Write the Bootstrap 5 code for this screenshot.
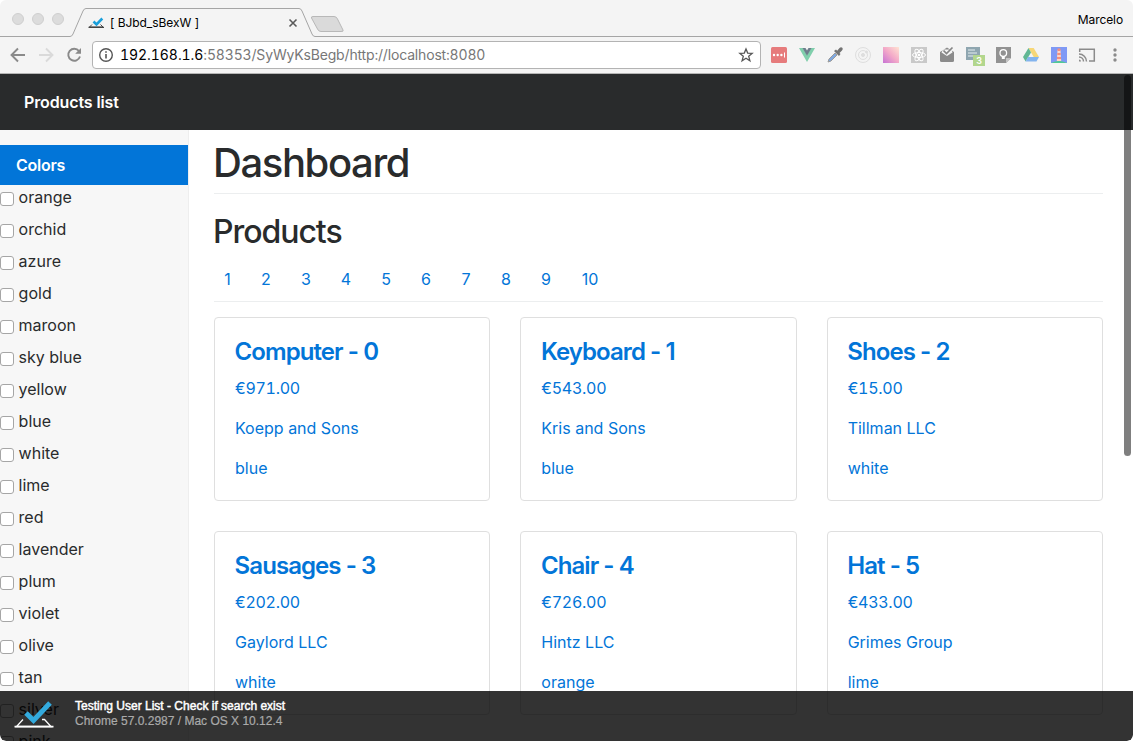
<!DOCTYPE html>
<html lang="en">
<head>
<meta charset="utf-8">
<meta name="viewport" content="width=device-width, initial-scale=1">
<title>Products list</title>
<link href="https://cdn.jsdelivr.net/npm/bootstrap@5.3.0/dist/css/bootstrap.min.css" rel="stylesheet">
<style>
html,body{height:100%;background:#fff}
body{font-family:Inter,"Liberation Sans",sans-serif;font-size:16px;line-height:24px;color:#292b2c;overflow:hidden}
.win{height:741px;border-radius:6px;display:grid;grid-template-rows:37px 36px 1fr;overflow:hidden}
.strip{background:#f4f4f4}
.strip svg{display:block}
.strip .art{position:absolute;inset:0}
.tabname{font-size:12px;line-height:16px;color:#000;margin-left:110px;padding-top:15px;letter-spacing:-.05px;width:176px}
.person{font-size:12px;line-height:16px;color:#000;padding:12px 10px 0 0;letter-spacing:-.1px}
.tools{background:#f4f4f4;padding:0 8px 0 8px}
.addr{height:28px;width:669px;border:1px solid #b3b3b3;border-radius:4px;margin:0 8px 0 7px;padding:0 6px 0 5px;font-size:14px;color:#777;font-variant-numeric:tabular-nums}
.addr b{font-weight:400;color:#000;letter-spacing:-.05px}
.url{padding-left:6px;letter-spacing:-.17px}
.page{overflow:hidden;border-top:1px solid #b5b5b5}
.topbar{height:56px;background:#292b2c;color:#fff;padding:0 24px;font-weight:600;letter-spacing:-.12px}
.side{width:189px;height:620px;background:#f7f7f7;border-right:1px solid #eee;padding-top:15px}
.side h2{height:40px;line-height:40px;font-size:16px;font-weight:600;background:#0275d8;color:#fff;margin:0;padding-left:16px;letter-spacing:-.25px}
.side li{height:32px;line-height:24px}
.side label{gap:4.6px}
.side input{appearance:none;width:14px;height:14px;border:1px solid #a6a6a6;border-radius:3px;background:#fff;margin:7px 0 0}
.board{padding:11px 30px 0 25px;height:620px}
.board h1{font-size:40px;line-height:44px;font-weight:500;margin:0;padding-bottom:8px;border-bottom:1px solid #eceeef;letter-spacing:-1.4px;text-indent:-1px}
.board h3{font-size:32px;line-height:35px;font-weight:500;margin:20px 0 0;letter-spacing:-1.05px;text-indent:-1px}
.pager{padding:18px 0 10px;border-bottom:1px solid #eceeef;margin-bottom:15px}
.pager a{width:40px;text-align:center;color:#0275d8;text-decoration:none}
.pager a:first-child{width:27px;margin-right:5px}
.pager a:last-child{width:48px}
.goods{--bs-gutter-x:30px}
.item{height:184px;border:1px solid #dfdfdf;border-radius:4px;padding:20px;margin-bottom:30px;color:#0275d8}
.item h4{font-size:24px;line-height:27px;font-weight:600;margin:0 0 11px;letter-spacing:-.93px;text-indent:-.4px}
.item p{margin:0 0 16px}
.item .price{font-variant-numeric:tabular-nums;letter-spacing:-.27px}
.status{left:0;right:0;bottom:0;height:50px;background:rgba(0,0,0,.8);border-radius:0 0 6px 6px;font-family:"Liberation Sans",sans-serif;font-size:12px;line-height:15px;color:#aaa;padding-left:14px}
.status strong{color:#fff;font-weight:400;-webkit-text-stroke:.45px #fff}
.caption-text{padding:8px 0 0 20px;-webkit-text-stroke:.2px #aaa}
.thumb{right:2px;top:75px;width:7px;height:381px;border-radius:4px;background:rgba(0,0,0,.5)}
</style>
</head>
<body>
<div class="win position-relative">
  <header class="strip position-relative d-flex justify-content-between">
    <svg class="art" width="1133" height="37" fill="none">
      <g fill="#dcdcdc" stroke="#cfcfcf"><circle cx="18" cy="19" r="5.5"/><circle cx="38" cy="19" r="5.5"/><circle cx="58" cy="19" r="5.5"/></g>
      <path d="M0 36.500H70Q72 36.500 73 34L83 11Q84 8.500 86 8.500H299Q301 8.500 302 11L312 34Q313 36.500 315 36.500H1133" stroke="#a5a5a5"/>
      <path d="M313 16.500H334Q336.500 16.500 337.500 19L343 30Q344 31.500 341 31.500H321Q318.500 31.500 317.500 29L311.500 18Q311 16.500 313 16.500Z" fill="#dadada" stroke="#b8b8b8"/>
      <path d="M289.500 19.500L296.500 26.500M296.500 19.500L289.500 26.500" stroke="#5a5a5a" stroke-width="1.600"/>
      <path d="M92 24.500L89.500 27H103L100.500 24.500" stroke="#444"/><path d="M88.500 27.300H104" stroke="#444" stroke-width="1.200"/>
      <path d="M93.500 21.500L96.500 24.500L102.300 18.500" stroke="#1ba0dc" stroke-width="2.600"/>
    </svg>
    <div class="tabname position-relative">[ BJbd_sBexW ]</div>
    <div class="person position-relative">Marcelo</div>
  </header>
  <div class="tools d-flex align-items-center">
    <svg width="77" height="28" fill="none" stroke="#8a8a8a" stroke-width="1.900">
      <path d="M17 14H4M10 7.500L3.500 14L10 20.500"/>
      <path d="M31 14H44M38 7.500L44.500 14L38 20.500" stroke="#dadada"/>
      <path d="M71 10A6 6 0 1 0 72 15.500"/><path d="M73 7V12.800H67.200Z" fill="#8a8a8a" stroke="none"/>
    </svg>
    <div class="addr d-flex align-items-center bg-white">
      <svg width="16" height="16" fill="none" stroke="#555" stroke-width="1.400"><circle cx="8" cy="8" r="6.300"/><path d="M8 7V11.500M8 4.300V5.800" stroke-width="1.600"/></svg>
      <span class="url flex-grow-1"><b>192.168.1.6</b>:58353/SyWyKsBegb/http://localhost:8080</span>
      <svg width="16" height="16" fill="none" stroke="#555" stroke-width="1.300"><path d="M8 1.900L9.700 6.100L14.200 6.400L10.700 9.300L11.900 13.700L8 11.200L4.100 13.700L5.300 9.300L1.800 6.400L6.300 6.100Z"/></svg>
    </div>
    <div class="d-flex align-items-center flex-grow-1 justify-content-between">
      <svg width="20" height="20"><rect x="2" y="2" width="16" height="16" rx="1.500" fill="#e67b7c"/><g fill="#fff"><circle cx="5" cy="10" r="1.200"/><circle cx="8.700" cy="10" r="1.200"/><circle cx="12.400" cy="10" r="1.200"/><path d="M15 7.500H16V12.500H15Z"/></g></svg>
      <svg width="20" height="20"><path d="M2 3H6L10 10L14 3H18L10 17Z" fill="#80cfac"/><path d="M5.500 3H8.500L10 5.500L11.500 3H14.500L10 10.800Z" fill="#6e7d8c"/></svg>
      <svg width="20" height="20"><path d="M3 17L4 14L10 8L12 10L6 16Z" fill="#7fa8e0" stroke="#9a9a9a"/><path d="M9 6L11 4.500L12.200 5.700L14.500 3Q16 1.500 17.300 2.700Q18.500 4 17 5.500L14.500 8L15.500 9L14 11Z" fill="#737373"/></svg>
      <svg width="20" height="20" fill="none" stroke="#dedede"><circle cx="10" cy="10" r="7.500"/><circle cx="10" cy="10" r="4.500"/><circle cx="10" cy="10" r="1.500" fill="#dedede"/><circle cx="13.500" cy="7" r="1" fill="#dedede"/></svg>
      <svg width="20" height="20"><defs><linearGradient id="pk" x1="0" y1="1" x2="1" y2="0"><stop stop-color="#c773d4"/><stop offset=".5" stop-color="#f3a9c8"/><stop offset="1" stop-color="#ffe3d2"/></linearGradient></defs><rect x="2" y="2" width="16" height="16" fill="url(#pk)"/></svg>
      <svg width="20" height="20"><rect x="2" y="2" width="16" height="16" fill="#c9c9c9"/><g fill="none" stroke="#fff" stroke-width="1"><ellipse cx="10" cy="10" rx="6.500" ry="2.500"/><ellipse cx="10" cy="10" rx="6.500" ry="2.500" transform="rotate(60 10 10)"/><ellipse cx="10" cy="10" rx="6.500" ry="2.500" transform="rotate(120 10 10)"/></g><circle cx="10" cy="10" r="1.300" fill="#fff"/></svg>
      <svg width="20" height="20"><path d="M3 7L10 2.500L17 7V15.500Q17 17 15.500 17H4.500Q3 17 3 15.500Z" fill="#8b8b8b"/><path d="M4.500 7.500L10 11L15.500 7.500L14.500 4.500H6Z" fill="#f4f4f4"/><path d="M6.500 5.500L9.500 8.500L15.500 2.500" stroke="#858585" stroke-width="1.700" fill="none"/></svg>
      <svg width="20" height="22"><path d="M1 3H15V16H1Z" fill="#8fa6b0"/><path d="M3 6H10M3 9H12M3 12H8" stroke="#e6eef0" stroke-width="1.200"/><rect x="8" y="11" width="12" height="11" fill="#b2d68d"/><text x="14" y="20" text-anchor="middle" font-family="Inter, sans-serif" font-size="9" font-weight="600" fill="#fff">3</text></svg>
      <svg width="20" height="20"><path d="M3 2H18V13L13 18H3Z" fill="#929292"/><path d="M18 13L13 18V13Z" fill="#c4c4c4"/><circle cx="10.300" cy="8" r="3.300" fill="none" stroke="#fff" stroke-width="1.300"/><path d="M8.800 11H11.800V14H8.800Z" fill="#fff"/></svg>
      <svg width="20" height="20"><path d="M7.500 3H12.700L18 12H12.700Z" fill="#f7d777"/><path d="M7.500 3L2 12L4.600 16.500L10 7.400Z" fill="#61b794"/><path d="M7 12H18L15.500 16.500H4.600Z" fill="#83b4ee"/></svg>
      <svg width="20" height="20"><rect x="2" y="2" width="16" height="16" fill="#7f99f5"/><path d="M8.500 5H11.500L12.200 16H7.800Z" fill="#ffd4c4"/><path d="M8.500 3.500H11.500V6H8.500ZM8.300 8H11.700V10H8.300ZM8 12H12V14H8Z" fill="#f48f7f"/><path d="M2 18Q10 14 18 18Z" fill="#51c996"/></svg>
      <svg width="20" height="20" fill="none" stroke="#8b8b8b" stroke-width="1.500"><path d="M2.700 7V4.200H17.300V16H12M2 9A7.500 7.500 0 0 1 9.500 16.500M2 12A4.500 4.500 0 0 1 6.500 16.500"/><path d="M2 14.500A2 2 0 0 1 4 16.500H2Z" fill="#8b8b8b" stroke="none"/></svg>
      <svg width="20" height="20" fill="#8b8b8b"><circle cx="10" cy="5" r="1.700"/><circle cx="10" cy="10" r="1.700"/><circle cx="10" cy="15" r="1.700"/></svg>
    </div>
  </div>
  <main class="page">
    <nav class="topbar d-flex align-items-center"><span>Products list</span></nav>
    <div class="d-flex">
      <aside class="side flex-shrink-0">
        <h2>Colors</h2>
        <ul class="list-unstyled m-0" id="colors"></ul>
      </aside>
      <section class="board flex-grow-1">
        <h1>Dashboard</h1>
        <h3>Products</h3>
        <nav class="pager d-flex"><a href="#">1</a><a href="#">2</a><a href="#">3</a><a href="#">4</a><a href="#">5</a><a href="#">6</a><a href="#">7</a><a href="#">8</a><a href="#">9</a><a href="#">10</a></nav>
        <div class="row goods" id="goods"></div>
      </section>
    </div>
  </main>
  <div class="thumb position-absolute"></div>
  <footer class="status position-absolute d-flex">
    <svg width="41" height="50" class="flex-shrink-0" fill="none"><path d="M9 28.500L2.500 35.500H37L30.500 28.500H28" stroke="#fff" stroke-width="1.300"/><path d="M0.500 35.700H39.500" stroke="#fff" stroke-width="1.800"/><path d="M12 22L19.500 29.500L36 12" stroke="#33aadd" stroke-width="5"/></svg>
    <div class="caption-text"><strong class="d-block">Testing User List - Check if search exist</strong><span>Chrome 57.0.2987 / Mac OS X 10.12.4</span></div>
  </footer>
</div>
<script src="https://cdn.jsdelivr.net/npm/bootstrap@5.3.0/dist/js/bootstrap.bundle.min.js"></script>
<script>
const colors=['orange','orchid','azure','gold','maroon','sky blue','yellow','blue','white','lime','red','lavender','plum','violet','olive','tan','silver','pink'];
document.getElementById('colors').innerHTML=colors.map(c=>`<li><label class="d-flex align-items-start"><input type="checkbox"><span>${c}</span></label></li>`).join('');
const goods=[['Computer - 0','€971.00','Koepp and Sons','blue'],['Keyboard - 1','€543.00','Kris and Sons','blue'],['Shoes - 2','€15.00','Tillman LLC','white'],['Sausages - 3','€202.00','Gaylord LLC','white'],['Chair - 4','€726.00','Hintz LLC','orange'],['Hat - 5','€433.00','Grimes Group','lime']];
document.getElementById('goods').innerHTML=goods.map(g=>`<div class="col-4"><article class="item"><h4>${g[0]}</h4><p class="price">${g[1]}</p><p>${g[2]}</p><p>${g[3]}</p></article></div>`).join('');
</script>
</body>
</html>
